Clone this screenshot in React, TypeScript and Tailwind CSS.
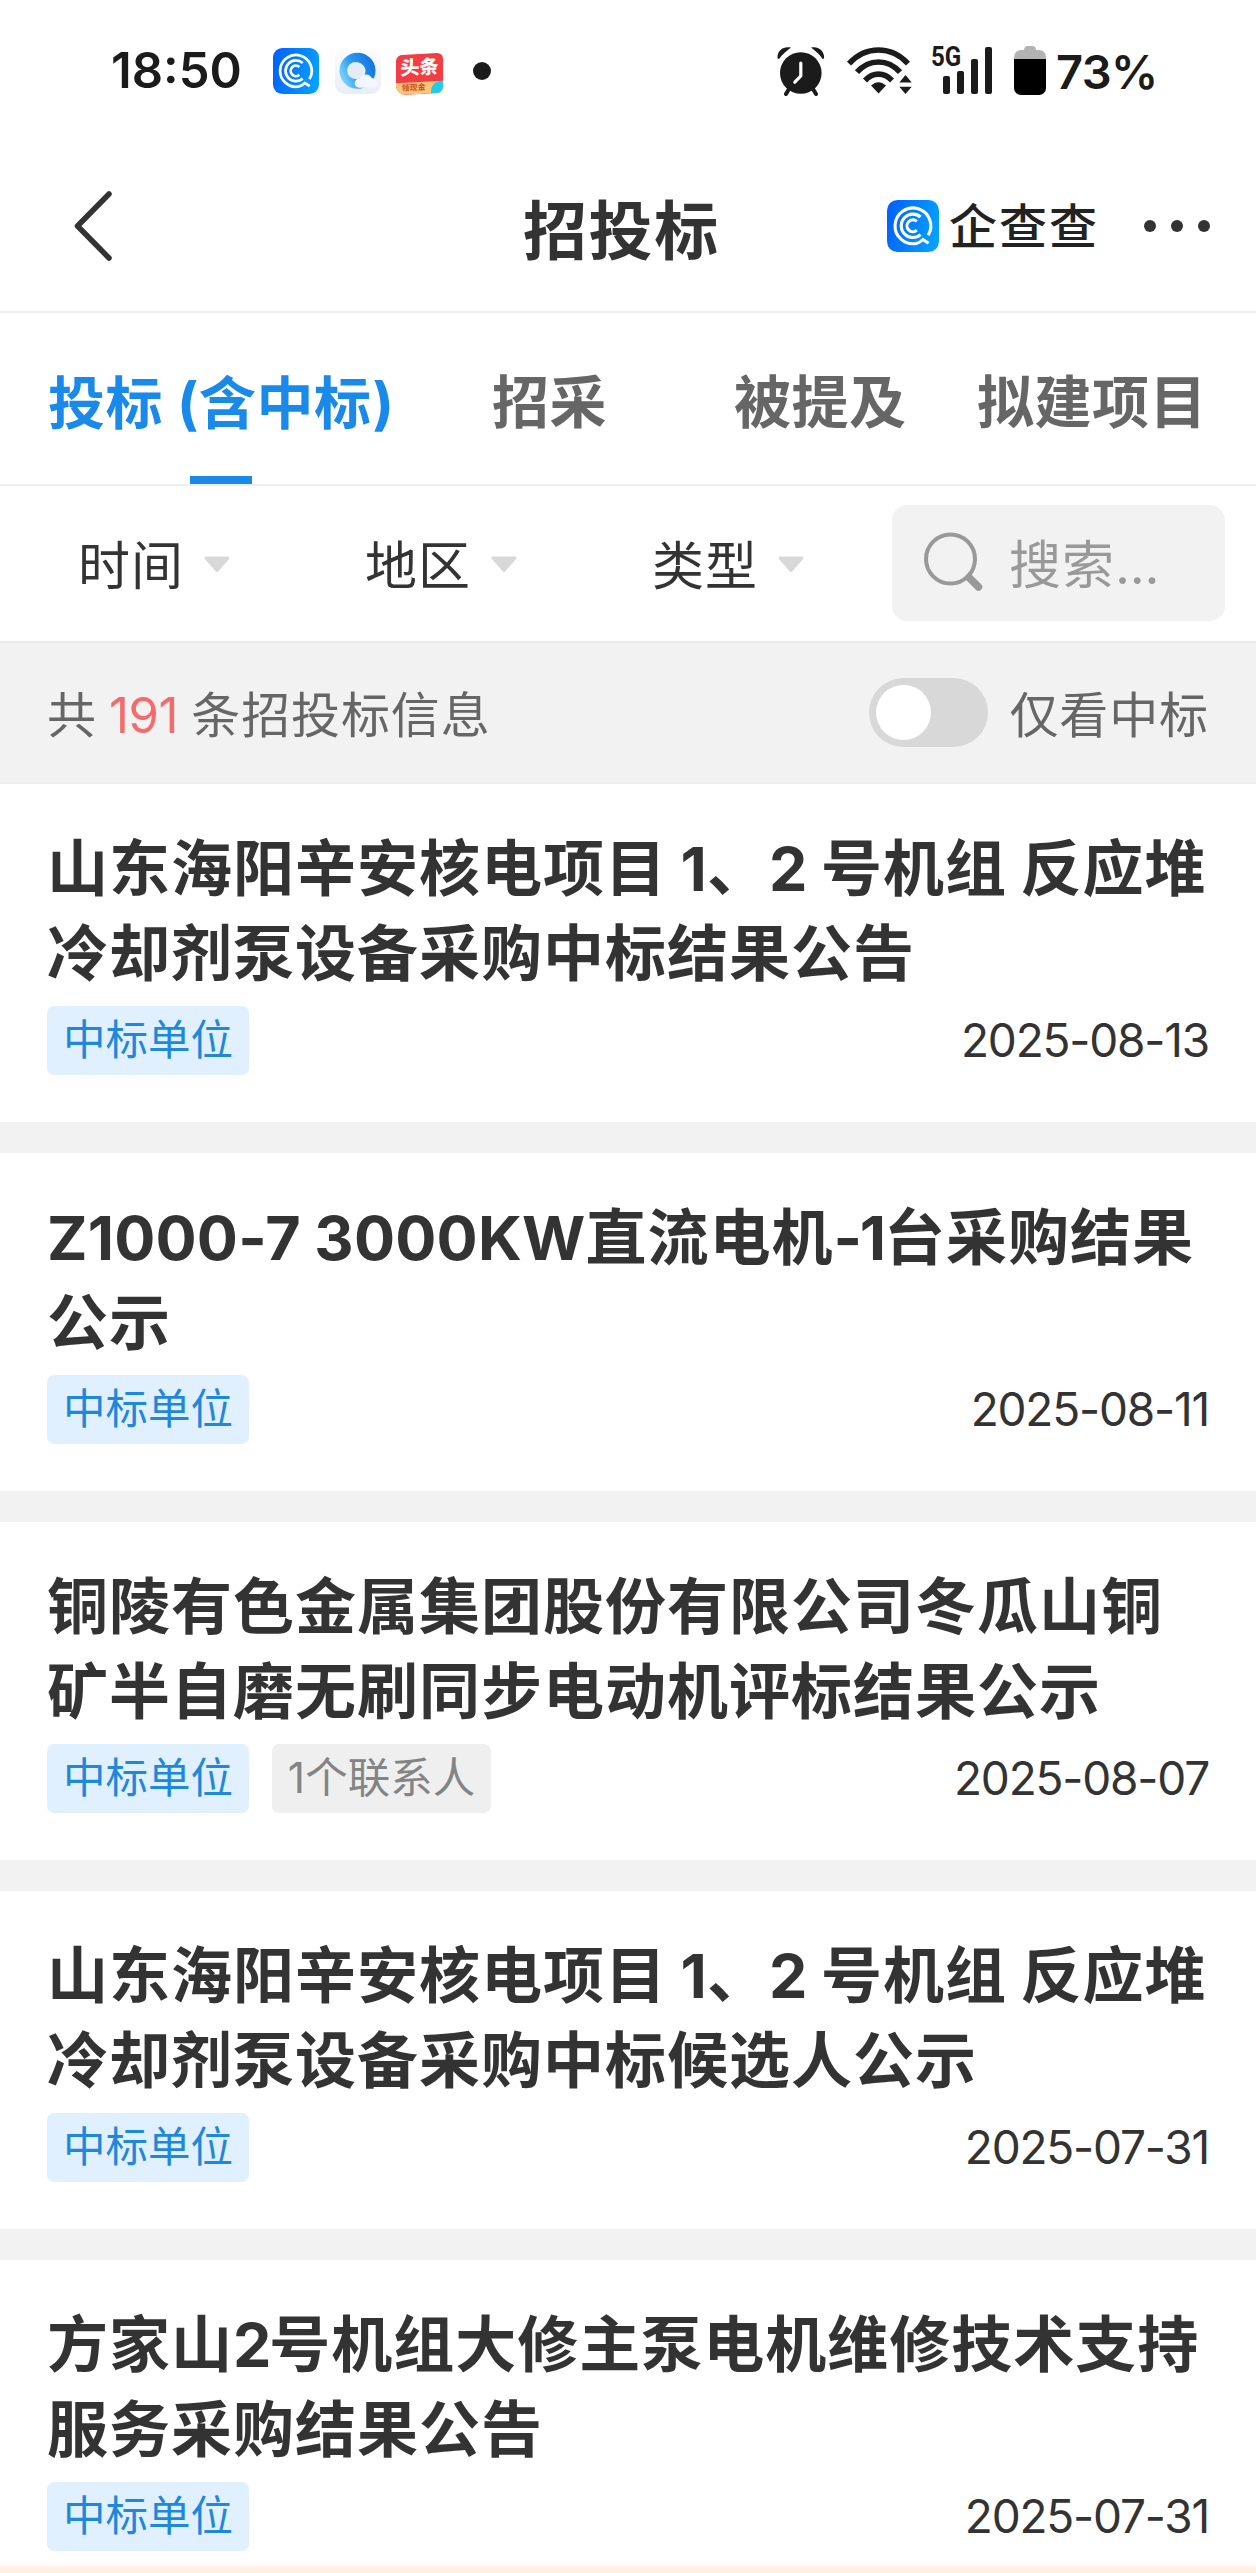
import React from "react";

type Bid = { lines: string[]; date: string; contacts?: string };

const bids: Bid[] = [
  { lines: ["山东海阳辛安核电项目 1、2 号机组 反应堆", "冷却剂泵设备采购中标结果公告"], date: "2025-08-13" },
  { lines: ["Z1000-7 3000KW直流电机-1台采购结果", "公示"], date: "2025-08-11" },
  { lines: ["铜陵有色金属集团股份有限公司冬瓜山铜", "矿半自磨无刷同步电动机评标结果公示"], date: "2025-08-07", contacts: "1个联系人" },
  { lines: ["山东海阳辛安核电项目 1、2 号机组 反应堆", "冷却剂泵设备采购中标候选人公示"], date: "2025-07-31" },
  { lines: ["方家山2号机组大修主泵电机维修技术支持", "服务采购结果公告"], date: "2025-07-31" },
];

function QccLogo({ className, id }: { className: string; id: string }) {
  return (
    <svg className={className} viewBox="0 0 52 52" fill="none">
      <defs>
        <linearGradient id={id} x1="0" y1="20" x2="52" y2="32" gradientUnits="userSpaceOnUse">
          <stop stopColor="#0363fb" />
          <stop offset="1" stopColor="#06a2fe" />
        </linearGradient>
      </defs>
      <rect width="52" height="52" rx="10.5" fill={`url(#${id})`} />
      <g stroke="#fff" strokeWidth="3.1">
        <path d="M41.2 35.2A17.9 17.9 0 1 0 29.5 43.4C32 42.8 34 41.5 36 39.5L41.5 43.2" />
        <path d="M33.6 17A11.7 11.7 0 1 0 33.6 34.6" />
        <path d="M29.8 21.4A5.9 5.9 0 1 0 29.8 30.2" />
      </g>
    </svg>
  );
}

function BrowserIcon() {
  return (
    <svg className="ml-[16px] size-[46px]" viewBox="0 0 46 46">
      <defs>
        <linearGradient id="ring" x1="6" y1="32" x2="40" y2="16" gradientUnits="userSpaceOnUse">
          <stop stopColor="#7fd8fd" />
          <stop offset=".45" stopColor="#2a9af3" />
          <stop offset="1" stopColor="#1273de" />
        </linearGradient>
        <linearGradient id="tile" x1="0" y1="0" x2="0" y2="1">
          <stop stopColor="#fdfdfe" />
          <stop offset="1" stopColor="#e9edf6" />
        </linearGradient>
      </defs>
      <rect width="46" height="46" rx="10" fill="url(#tile)" />
      <circle cx="22.5" cy="22.8" r="13" fill="none" stroke="url(#ring)" strokeWidth="10" />
      <circle cx="20.5" cy="22.5" r="8.4" fill="#e3ecf7" />
      <path d="M24 39.8a4.6 4.6 0 0 1 .6-9.2 6.8 6.8 0 0 1 12.4-.3 4.8 4.8 0 1 1 .6 9.5Z" fill="#f3f6fc" />
    </svg>
  );
}

function NewsIcon() {
  return (
    <div className="ml-[15px] mt-[6px] flex h-[40px] w-[47px] -skew-y-3 flex-col overflow-hidden rounded-[6px] rounded-bl-[10px] bg-[#f23d45]">
      <span className="h-[28px] whitespace-nowrap text-center text-[19px] font-black leading-[28px] text-white">头条</span>
      <div className="flex h-[12px] bg-[#fdc777]">
        <span className="w-[35px] text-center text-[8px] font-bold leading-[11px] text-[#c94a1b]">领现金</span>
        <span className="h-[14px] w-[12px] rounded-tl-[9px] bg-[#22cbe6]" />
      </div>
    </div>
  );
}

function AlarmIcon() {
  return (
    <svg className="h-[50px] w-[48px]" viewBox="0 0 48 50" fill="#1b1b1b">
      <circle cx="23.8" cy="27" r="20.8" />
      <path d="M.6 12.5C-.5 5 6.5-.5 14 1.6 10 4.6 5 8.5 2 13ZM47 12.5C48 5 41 -.5 34 1.6 38 4.6 43 8.5 45.6 13Z" />
      <path d="M12 43 9 48M36 43l3 5" stroke="#1b1b1b" strokeWidth="4" strokeLinecap="round" />
      <path d="M23.8 17v13l-6 6.2" fill="none" stroke="#fff" strokeWidth="3.2" strokeLinecap="round" strokeLinejoin="round" />
    </svg>
  );
}

function WifiIcon() {
  return (
    <svg className="ml-[22px] h-[48px] w-[66px]" viewBox="0 0 66 48" fill="#1b1b1b">
      <g fill="none" stroke="#1b1b1b" strokeWidth="5.6">
        <path d="M2 16.6C19-1.5 44-1.5 61 16.6" />
        <path d="M10 25.2C22 11.5 41 11.5 53 25.2" />
        <path d="M18 33.5C26 25 37 25 45 33.5" />
      </g>
      <path d="M24 38.5c5-4.5 10-4.5 15 0L31.5 46.5Z" />
      <path d="M58.5 28l6.2 7.6H52.3ZM58.5 47l6.2-7.2H52.3Z" />
    </svg>
  );
}

function SignalIcon() {
  return (
    <div className="ml-[18px] flex h-[47px] items-end">
      <span className="mr-[-16px] block h-[47px] w-[28px] origin-left scale-x-[0.86] whitespace-nowrap font-[Roboto] text-[28px] font-bold leading-[20px] text-[#1b1b1b]">5G</span>
      <span className="h-[18px] w-[7px] rounded-[2px] bg-[#1b1b1b]" />
      <span className="ml-[7px] h-[23px] w-[7px] rounded-[2px] bg-[#1b1b1b]" />
      <span className="ml-[7px] h-[35px] w-[7px] rounded-[2px] bg-[#1b1b1b]" />
      <span className="ml-[7px] h-[47px] w-[7px] rounded-[2px] bg-[#1b1b1b]" />
    </div>
  );
}

function BatteryIcon() {
  return (
    <div className="ml-[22px] flex h-[49px] w-[32px] flex-col items-center">
      <span className="h-[4px] w-[12px] rounded-t-[4px] bg-[#b3b3b3]" />
      <span className="h-[9px] w-full rounded-t-[7px] bg-[#b3b3b3]" />
      <span className="h-[36px] w-full rounded-b-[7px] bg-black" />
    </div>
  );
}

function StatusBar() {
  return (
    <div className="flex h-[141px] items-center text-[#1b1b1b]">
      <span className="ml-[111px] w-[162px] text-[49px] font-semibold leading-none">18:50</span>
      <QccLogo className="size-[46px]" id="qccSmall" />
      <BrowserIcon />
      <NewsIcon />
      <span className="ml-[30px] size-[18px] rounded-full bg-[#1b1b1b]" />
      <div className="ml-auto flex items-center">
        <AlarmIcon />
        <WifiIcon />
        <SignalIcon />
        <BatteryIcon />
      </div>
      <span className="ml-[10px] mr-[100px] mt-[2px] w-[100px] whitespace-nowrap text-[47px] font-semibold leading-none tracking-[-0.6px]">73%</span>
    </div>
  );
}

function Header() {
  return (
    <header className="flex h-[172px] items-center border-b-2 border-[#eee] text-[#333]">
      <svg className="ml-[73px] h-[72px] w-[40px]" viewBox="0 0 40 72" fill="none" stroke="#333" strokeWidth="5.5" strokeLinecap="round" strokeLinejoin="round">
        <path d="M36 4 4.5 36 36 68" />
      </svg>
      <h1 className="ml-[410px] mt-[10px] w-[200px] whitespace-nowrap text-[64px] font-bold leading-none tracking-[1.6px]">招投标</h1>
      <QccLogo className="ml-[164px] size-[52px]" id="qccLarge" />
      <span className="ml-[10px] mt-[2px] w-[155px] whitespace-nowrap text-[48px] font-medium leading-none tracking-[2px] text-[#222]">企查查</span>
      <div className="ml-[40px] flex gap-[15px]">
        {[0, 1, 2].map((i) => (
          <span key={i} className="size-[12px] rounded-full bg-[#333]" />
        ))}
      </div>
    </header>
  );
}

function Tabs() {
  return (
    <nav className="flex h-[173px] border-b-2 border-[#eee] text-[57px] font-bold tracking-[0.5px] text-[#666]">
      <div className="ml-[48px] flex w-[345px] flex-col items-center whitespace-nowrap text-[#1989ea]">
        <span className="mb-auto mt-[54px] flex h-[72px] items-center self-start leading-none">
          投标<span className="ml-[14px]">(</span>含中标<span className="ml-px">)</span>
        </span>
        <span className="h-[8px] w-[62px] bg-[#1989ea]" />
      </div>
      <span className="ml-[99px] mt-[54px] w-[118px] whitespace-nowrap leading-[72px]">招采</span>
      <span className="ml-[124px] mt-[54px] w-[174px] whitespace-nowrap leading-[72px]">被提及</span>
      <span className="ml-[69px] mt-[54px] whitespace-nowrap leading-[72px]">拟建项目</span>
    </nav>
  );
}

function Filter({ label }: { label: string }) {
  return (
    <div className="flex w-[287px] items-center">
      <span className="mt-[2px] w-[125px] whitespace-nowrap text-[52px] leading-[72px] tracking-[1px]">{label}</span>
      <svg className="mb-[4px] h-[17px] w-[28px]" viewBox="0 0 28 17">
        <path d="M3 2h22L14 14.5Z" fill="#d8d8d8" stroke="#d8d8d8" strokeWidth="3" strokeLinejoin="round" />
      </svg>
    </div>
  );
}

function FilterBar() {
  return (
    <div className="flex h-[157px] items-center border-b-2 border-[#ececec] pl-[78px] text-[#333]">
      <div className="mt-[5px] flex">
        <Filter label="时间" />
        <Filter label="地区" />
        <Filter label="类型" />
      </div>
      <div className="mb-px ml-[-47px] flex h-[116px] w-[333px] items-center rounded-[15px] bg-[#f2f2f2] text-[#999]">
        <svg className="ml-[31px] size-[64px]" viewBox="0 0 64 64" fill="none" stroke="#999">
          <circle cx="27.5" cy="28" r="24.5" strokeWidth="4" />
          <path d="M46 46.5 55.5 56" strokeWidth="7.5" strokeLinecap="round" />
        </svg>
        <span className="ml-[22px] mt-[6px] whitespace-nowrap text-[52px] leading-[72px] tracking-[1px]">搜索<span className="tracking-[-0.2px]">...</span></span>
      </div>
    </div>
  );
}

function SummaryBar() {
  return (
    <div className="flex h-[141px] items-center border-b-2 border-[#ececec] bg-[#f2f2f2] pl-[47px] pr-[47px] text-[49px] tracking-[0.9px] text-[#666]">
      <p className="mt-[7px] whitespace-nowrap leading-[72px]">
        共<span className="ml-[12px] mr-[13px] tracking-[-0.3px] text-[#f56a6a]">191</span>条招投标信息
      </p>
      <div className="ml-auto flex h-[69px] w-[119px] items-center rounded-full bg-[#d8d8d8] pl-[7px]">
        <span className="size-[55px] rounded-full bg-white" />
      </div>
      <span className="ml-[21px] mt-[7px] whitespace-nowrap leading-[72px]">仅看中标</span>
    </div>
  );
}

function TitleLine({ text }: { text: string }) {
  return (
    <span className="block whitespace-nowrap">
      {text.split(/([ -~]+)/).map((part, i) =>
        i % 2 ? (
          <span
            key={i}
            className={
              part.includes(" ")
                ? "whitespace-pre tracking-[0.2px] [word-spacing:-1.2px]"
                : "tracking-[-2.2px]"
            }
          >
            {part}
          </span>
        ) : (
          part
        ),
      )}
    </span>
  );
}

function BidCard({ bid }: { bid: Bid }) {
  return (
    <article className="h-[338px] shrink-0 bg-white px-[47px] pt-[43px]">
      <h2 className="text-[61px] font-bold leading-[85px] tracking-[1px] text-[#333]">
        {bid.lines.map((line) => (
          <TitleLine key={line} text={line} />
        ))}
      </h2>
      <div className="mt-[9px] flex h-[69px] items-center gap-[23px]">
        <span className="flex h-[69px] w-[202px] items-center justify-center whitespace-nowrap rounded-[7px] bg-[#e1f0fe] text-[42.5px] leading-none text-[#1e88dd]">中标单位</span>
        {bid.contacts && (
          <span className="flex h-[69px] w-[219px] items-center justify-center whitespace-nowrap rounded-[7px] bg-[#efefef] text-[42.5px] leading-none text-[#848484]">{bid.contacts}</span>
        )}
        <time className="mb-[2px] ml-auto whitespace-nowrap text-[46px] leading-none tracking-[-1.2px] text-[#333]">{bid.date}</time>
      </div>
    </article>
  );
}

export default function App() {
  return (
    <div className="flex h-[2573px] w-[1256px] flex-col overflow-hidden bg-white font-[Inter,'Noto_Sans_CJK_SC',sans-serif]">
      <StatusBar />
      <Header />
      <Tabs />
      <FilterBar />
      <SummaryBar />
      <main className="flex h-[1782px] flex-col gap-[31px] overflow-hidden bg-[#f2f2f2]">
        {bids.map((bid, i) => (
          <BidCard key={i} bid={bid} />
        ))}
      </main>
      <div className="h-[7px] bg-[#fff0e1]" />
    </div>
  );
}
